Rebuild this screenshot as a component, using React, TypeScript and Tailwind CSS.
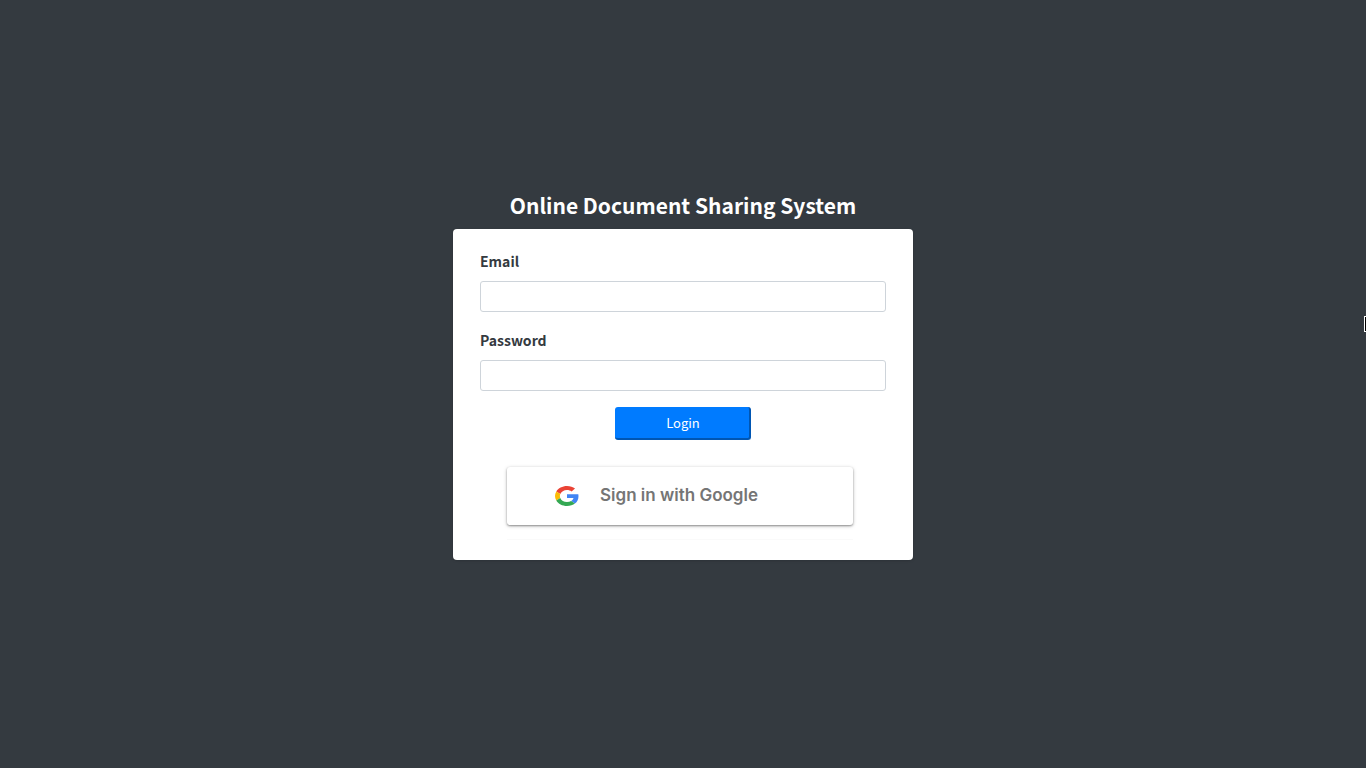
import type { FormEvent } from "react";

const fieldClass =
  "block h-[31px] w-full rounded-[3px] border border-[#ced4da] bg-white px-2 text-sm text-[#495057] outline-none focus:border-[#80bdff]";
const labelClass = "mb-2 block text-sm leading-6 font-bold text-[#343a40]";

function GoogleLogo() {
  return (
    <svg viewBox="0 0 48 48" preserveAspectRatio="none" className="h-5 w-6 shrink-0" aria-hidden="true">
      <path fill="#EA4335" d="M24 9.5c3.54 0 6.71 1.22 9.21 3.6l6.85-6.85C35.9 2.38 30.47 0 24 0 14.62 0 6.51 5.38 2.56 13.22l7.98 6.19C12.43 13.72 17.74 9.5 24 9.5z" />
      <path fill="#4285F4" d="M46.98 24.55c0-1.57-.15-3.09-.38-4.55H24v9.02h12.94c-.58 2.96-2.26 5.48-4.78 7.18l7.73 6c4.51-4.18 7.09-10.36 7.09-17.65z" />
      <path fill="#FBBC05" d="M10.53 28.59c-.48-1.45-.76-2.99-.76-4.59s.27-3.14.76-4.59l-7.98-6.19C.92 16.46 0 20.12 0 24c0 3.88.92 7.54 2.56 10.78l7.97-6.19z" />
      <path fill="#34A853" d="M24 48c6.48 0 11.93-2.13 15.89-5.81l-7.73-6c-2.15 1.45-4.92 2.3-8.16 2.3-6.26 0-11.57-4.22-13.47-9.91l-7.98 6.19C6.51 42.62 14.62 48 24 48z" />
    </svg>
  );
}

export default function App() {
  const handleSubmit = (event: FormEvent) => event.preventDefault();

  return (
    <div className="relative flex min-h-screen flex-col items-center overflow-hidden bg-[#343a40] px-4 pt-48 font-['Noto_Sans_CJK_SC',sans-serif]">
      <h1 className="mb-2.5 text-[21px] leading-[27px] font-bold text-white">Online Document Sharing System</h1>
      <main className="w-full max-w-[460px] rounded bg-white px-[27px] pt-5 pb-5 shadow-sm">
        <form onSubmit={handleSubmit}>
          <div className="mb-4">
            <label htmlFor="email" className={labelClass}>Email</label>
            <input id="email" type="email" className={fieldClass} />
          </div>
          <div className="mb-4">
            <label htmlFor="password" className={labelClass}>Password</label>
            <input id="password" type="password" className={fieldClass} />
          </div>
          <button
            type="submit"
            className="mx-auto block h-[33px] w-[136px] rounded-[3px] border-r-2 border-b-2 border-[#0056b3] bg-[#007bff] pl-0.5 text-[13px] text-white"
          >
            Login
          </button>
        </form>
        <div className="mt-[27px] ml-[27px] max-w-[346px] border-b border-[#fafafa] pb-3.5">
          <button
            type="button"
            className="flex h-[58px] w-full items-center gap-[21px] rounded-[3px] bg-white pl-12 font-['Inter',sans-serif] text-[17px] font-semibold text-[#757575] shadow-[0_1px_2px_rgba(0,0,0,0.35),0_1px_4px_rgba(0,0,0,0.2)]"
          >
            <GoogleLogo />
            <span>Sign in with Google</span>
          </button>
        </div>
      </main>
      <svg className="absolute top-[316px] right-0 h-4 w-0.5" viewBox="0 0 2 16" aria-hidden="true">
        <path fill="#fff" d="M0 0h2v16H0z" />
        <path fill="#000" d="M1 1h1v14H1z" />
      </svg>
    </div>
  );
}
